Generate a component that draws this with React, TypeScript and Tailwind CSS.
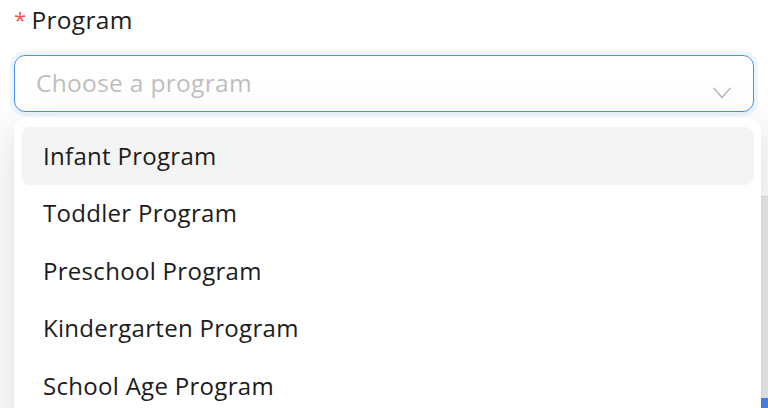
const programs = [
  'Infant Program',
  'Toddler Program',
  'Preschool Program',
  'Kindergarten Program',
  'School Age Program',
];

const App: React.FC = () => {
  return (
    <div className="relative w-[768px] h-[408px] overflow-hidden bg-white font-['Open_Sans',sans-serif] text-[#1c1c1c] tracking-[0.3px]">
      <div className="flex h-full">
        <div className="flex-1 pl-[14px] pt-[4px]">
          <label className="flex items-start gap-[5px] text-[24.5px] leading-[32px] font-medium">
            <span className="text-[#ff4d4f] text-[22px] leading-[30px]">*</span>
            <span>Program</span>
          </label>
          <div className="mt-[19px] mr-[7px] h-[57px] rounded-[11px] border-[1.5px] border-[#4d8ff3] shadow-[0_0_0_4px_rgba(5,145,255,0.08)] flex items-center pl-[21px] pr-[22px]">
            <span className="flex-1 text-[24.5px] text-[#bfbfbf] font-medium">Choose a program</span>
            <svg width="18" height="12" viewBox="0 0 18 12" className="mt-[18px]" fill="none">
              <path d="M1 1.5 L9 10.5 L17 1.5" stroke="#bfbfbf" strokeWidth="1.8" strokeLinecap="round" strokeLinejoin="round" />
            </svg>
          </div>
        </div>
        <div className="w-[7px] flex flex-col pt-[196px]">
          <div className="flex-1 bg-[#ececec] border-t border-[#e0e0e0]" />
          <div className="h-[10px] bg-[#4a86e8]" />
        </div>
      </div>

      <div className="absolute left-[14px] top-[118px] w-[747px] h-[320px] rounded-[12px] bg-white py-[9px] px-[7px] shadow-[0_12px_32px_0_rgba(0,0,0,0.08),0_6px_12px_-8px_rgba(0,0,0,0.12),0_18px_56px_16px_rgba(0,0,0,0.05)]">
        {programs.map((p, i) => (
          <div
            key={p}
            className={`h-[57.5px] flex items-center pl-[22px] rounded-[9px] text-[24px] font-medium ${i === 0 ? 'bg-[#f4f4f4]' : ''}`}
          >
            {p}
          </div>
        ))}
      </div>
    </div>
  );
};

export default App;
